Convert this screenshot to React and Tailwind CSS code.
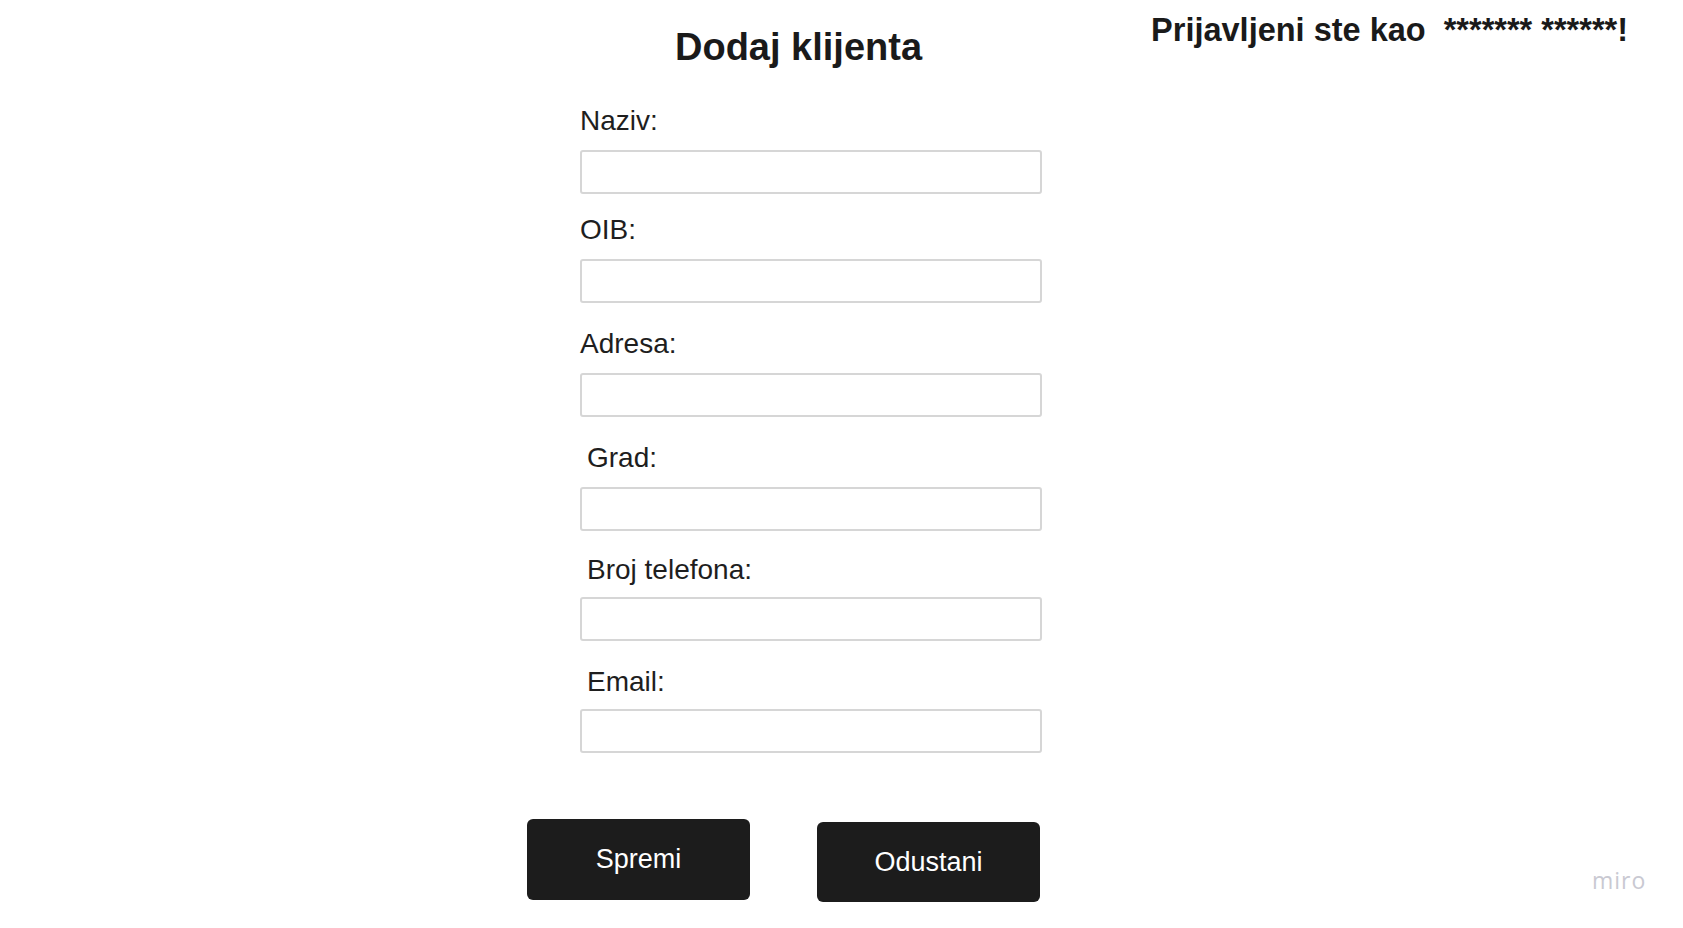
const fields = [
  { label: 'Naziv:', wrap: 'mt-[41px]', labelCls: 'mb-[15px]' },
  { label: 'OIB:', wrap: 'mt-[22px]', labelCls: 'mb-[15px]' },
  { label: 'Adresa:', wrap: 'mt-[27px]', labelCls: 'mb-[15px]' },
  { label: 'Grad:', wrap: 'mt-[27px]', labelCls: 'mb-[15px] pl-[7px]' },
  { label: 'Broj telefona:', wrap: 'mt-[25px]', labelCls: 'mb-[13px] pl-[7px]' },
  { label: 'Email:', wrap: 'mt-[27px]', labelCls: 'mb-[13px] pl-[7px]' },
];

export default function App() {
  return (
    <div className="relative h-[928px] w-full overflow-hidden bg-white font-['Liberation_Sans',Arial,sans-serif] text-[#1e1e1e]">
      {/* Top row */}
      <div className="flex items-start pl-[675px]">
        <h1 className="mt-[28px] text-[38px] font-bold leading-none text-[#1a1a1a]">
          Dodaj klijenta
        </h1>
        <p className="ml-auto mr-[55px] mt-[14px] whitespace-pre text-[32.5px] font-bold leading-none text-[#1a1a1a]">
          Prijavljeni ste kao  ******* ******!
        </p>
      </div>

      {/* Form */}
      <form className="ml-[580px] w-[462px]" onSubmit={(e) => e.preventDefault()}>
        {fields.map((f) => (
          <div key={f.label} className={f.wrap}>
            <label className={`block text-[28px] leading-none ${f.labelCls}`}>
              {f.label}
            </label>
            <input
              type="text"
              className="block h-[44px] w-full rounded-[3px] border-2 border-[#d6d6d6] bg-white px-3 text-[20px] outline-none"
            />
          </div>
        ))}
      </form>

      {/* Buttons */}
      <div className="ml-[527px] mt-[66px] flex items-start gap-[67px]">
        <button className="flex h-[81px] w-[223px] items-center justify-center rounded-[6px] bg-[#1c1c1c] text-[27px] text-white">
          Spremi
        </button>
        <button className="mt-[3px] flex h-[80px] w-[223px] items-center justify-center rounded-[6px] bg-[#1c1c1c] text-[27px] text-white">
          Odustani
        </button>
      </div>

      {/* Watermark */}
      <span className="absolute left-[1592px] top-[869px] font-['Open_Sans',sans-serif] text-[23px] leading-none tracking-[1px] text-[#c9c9d2]">
        miro
      </span>
    </div>
  );
}
